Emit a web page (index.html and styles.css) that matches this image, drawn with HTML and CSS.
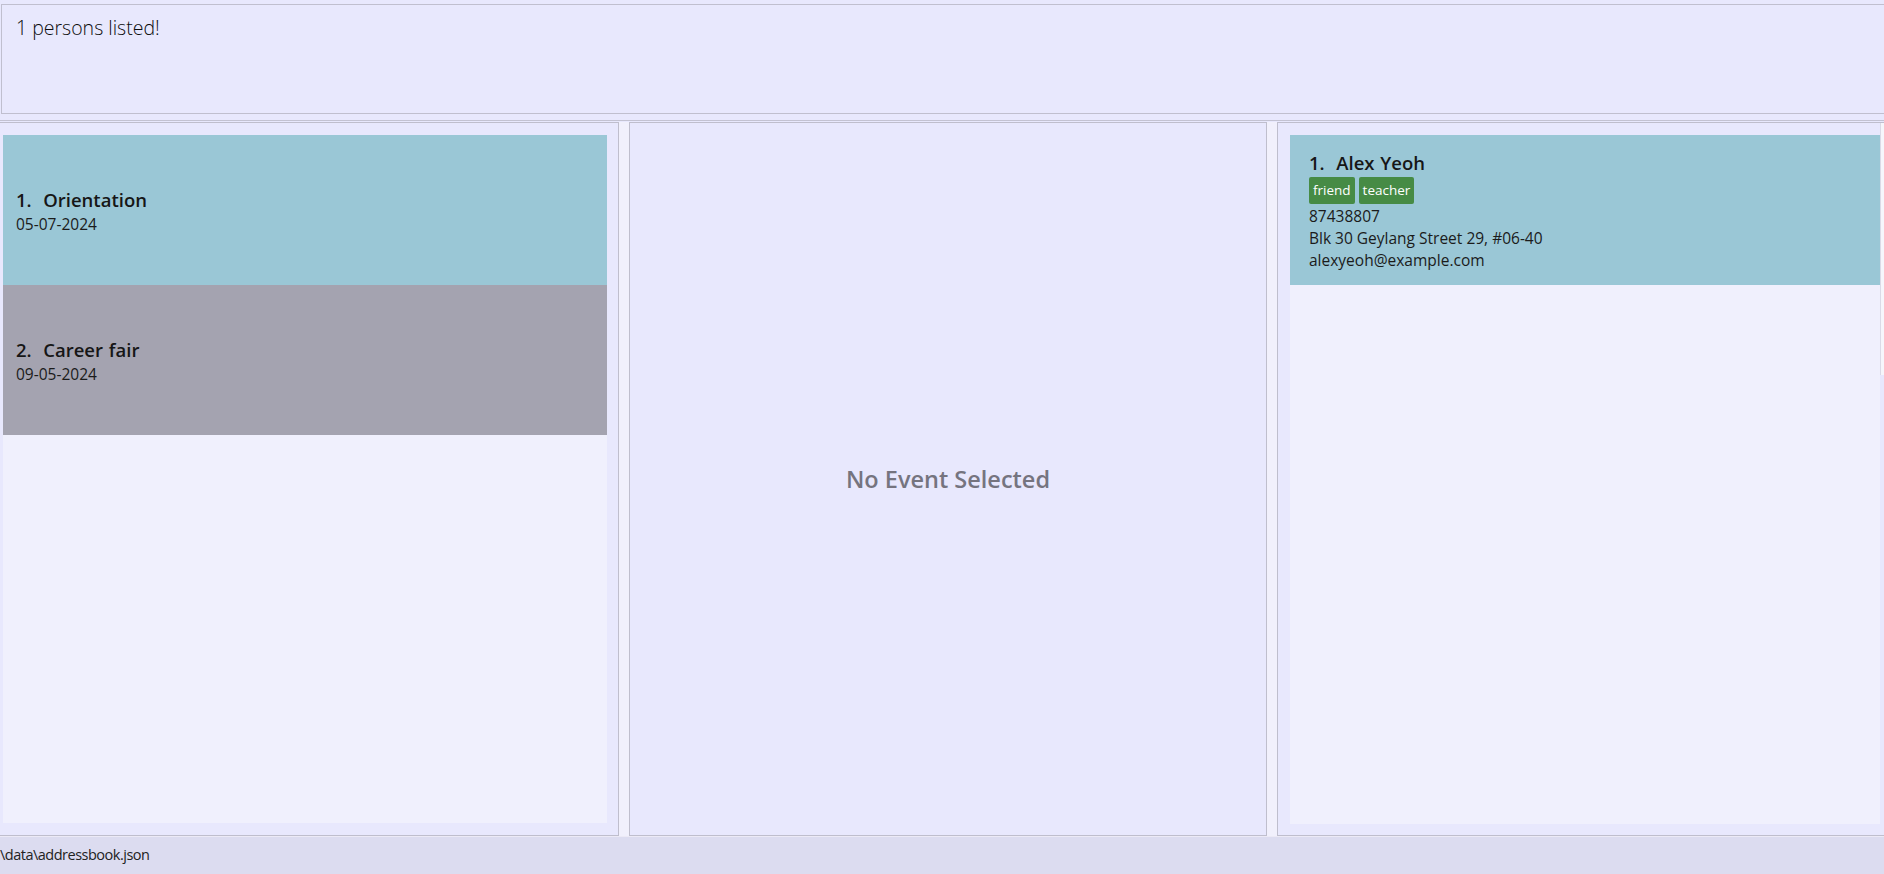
FILE: index.html
```html
<!DOCTYPE html>
<html>
<head>
<meta charset="utf-8">
<link rel="stylesheet" href="styles.css">
</head>
<body>
<div class="app">
  <div class="top">
    <div class="result">1 persons listed!</div>
  </div>
  <div class="main">
    <div class="panel events">
      <div class="list">
        <div class="card selected">
          <div class="title">1.&nbsp;&nbsp;Orientation</div>
          <div class="field">05-07-2024</div>
        </div>
        <div class="card alt">
          <div class="title">2.&nbsp;&nbsp;Career fair</div>
          <div class="field">09-05-2024</div>
        </div>
      </div>
    </div>
    <div class="divider"></div>
    <div class="panel detail">
      <div class="empty">No Event Selected</div>
    </div>
    <div class="divider"></div>
    <div class="panel persons">
      <div class="list">
        <div class="card selected person">
          <div class="title">1.&nbsp;&nbsp;Alex Yeoh</div>
          <div class="tags"><span class="tag">friend</span><span class="tag">teacher</span></div>
          <div class="field">87438807</div>
          <div class="field">Blk 30 Geylang Street 29, #06-40</div>
          <div class="field">alexyeoh@example.com</div>
        </div>
      </div>
      <div class="scrollbar"></div>
    </div>
  </div>
  <div class="status"><span class="path">\data\addressbook.json</span></div>
</div>
</body>
</html>
```

FILE: styles.css
```css
html, body {
  margin: 0;
  padding: 0;
  height: 874px;
  overflow: hidden;
}
body {
  background: #e8e8fd;
  font-family: "Open Sans", "Noto Sans", sans-serif;
  color: #1a1a1a;
}
.app {
  display: flex;
  flex-direction: column;
  height: 874px;
}
.top {
  border-bottom: 1px solid #c3c2d2;
  padding-top: 4px;
  box-sizing: border-box;
  height: 121px;
  overflow: hidden;
}
.result {
  margin-left: 1px;
  margin-right: -10px;
  height: 110px;
  box-sizing: border-box;
  border: 1px solid #c0bfcf;
  background: #e8e8fd;
  padding: 9px 14px;
  font-size: 19.5px;
  font-weight: 300;
  color: #0d0d0d;
}
.main {
  display: flex;
  padding-top: 1px;
  height: 715px;
  box-sizing: border-box;
}
.panel {
  box-sizing: border-box;
  border: 1px solid #bfbecd;
  background: #e8e8fd;
  height: 714px;
}
.events {
  width: 619px;
  border-left: none;
  padding: 12px 11px 12px 3px;
}
.divider {
  width: 10px;
  background: #f1f0fc;
}
.detail {
  width: 638px;
  display: flex;
  align-items: center;
  justify-content: center;
}
.empty {
  font-size: 23.5px;
  font-weight: 600;
  color: #75747f;
}
.persons {
  flex: 1;
  border-right: none;
  padding: 12px 4px 11px 12px;
  position: relative;
}
.list {
  background: #f0f0fd;
  height: 100%;
}
.card {
  height: 150px;
  box-sizing: border-box;
  display: flex;
  flex-direction: column;
  justify-content: center;
  padding-left: 13px;
  padding-top: 1px;
}
.card.selected {
  background: #9ac7d6;
}
.card.alt {
  background: #a4a3b0;
}
.title {
  font-size: 18.5px;
  font-weight: 600;
  line-height: 26px;
  color: #161616;
  word-spacing: 1px;
}
.field {
  font-size: 15.5px;
  line-height: 22px;
  color: #1b1b1b;
}
.card.person {
  padding-left: 19px;
  padding-top: 0;
}
.tags {
  display: flex;
  gap: 4px;
  margin: 1px 0 1px;
}
.tag {
  background: #468b45;
  color: #ffffff;
  font-size: 13.5px;
  line-height: 18px;
  padding: 4px 4px 5px;
  border-radius: 2px;
}
.scrollbar {
  position: absolute;
  right: 0;
  top: 0;
  width: 3px;
  height: 252px;
  background: #f6f6fb;
  border-left: 1px solid #dadae6;
}
.status {
  flex: 1;
  background: #dcdcf0;
  border-top: 1px solid #eceaf6;
  display: flex;
  align-items: center;
  overflow: hidden;
  padding-bottom: 3px;
}
.path {
  font-size: 14.5px;
  letter-spacing: -0.5px;
  color: #222;
  white-space: nowrap;
}
```
